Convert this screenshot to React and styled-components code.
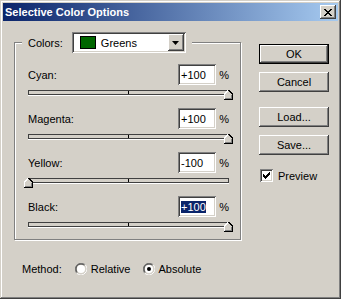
import React from "react";
import styled, { createGlobalStyle } from "styled-components";

const GlobalStyle = createGlobalStyle`
  html, body {
    margin: 0;
    padding: 0;
    background: #d4d0c8;
  }
  body {
    font-family: "Liberation Sans", Arial, sans-serif;
    font-size: 11px;
    color: #000;
  }
`;

const Window = styled.div`
  width: 341px;
  height: 299px;
  box-sizing: border-box;
  padding: 3px;
  background: #d4d0c8;
  box-shadow: inset -1px -1px #404040, inset 1px 1px #d4d0c8,
    inset -2px -2px #808080, inset 2px 2px #fff;
  display: flex;
  flex-direction: column;
`;

const TitleBar = styled.div`
  height: 18px;
  display: flex;
  align-items: center;
  padding: 0 2px;
  background: linear-gradient(to right, #0a246a, #a6caf0);
`;

const Title = styled.div`
  flex: 1;
  color: #fff;
  font-weight: bold;
  font-size: 11px;
`;

const raised = `
  background: #d4d0c8;
  box-shadow: inset -1px -1px #404040, inset 1px 1px #fff,
    inset -2px -2px #808080, inset 2px 2px #d4d0c8;
`;

const sunken = `
  background: #fff;
  box-shadow: inset 1px 1px #808080, inset -1px -1px #fff,
    inset 2px 2px #404040, inset -2px -2px #d4d0c8;
`;

const CloseButton = styled.div`
  ${raised}
  width: 16px;
  height: 14px;
  display: flex;
  align-items: center;
  justify-content: center;
`;

const Body = styled.div`
  flex: 1;
  display: flex;
`;

const LeftCol = styled.div`
  display: flex;
  flex-direction: column;
  padding: 21px 0 0 11px;
`;

const Group = styled.div`
  position: relative;
  width: 227px;
  height: 198px;
  box-sizing: border-box;
  border: 1px solid #808080;
  box-shadow: inset 1px 1px #fff, 1px 1px #fff;
  padding: 21px 0 0 13px;
`;

const Legend = styled.div`
  position: absolute;
  top: -11px;
  left: 7px;
  padding: 0 6px;
  background: #d4d0c8;
  display: flex;
  align-items: center;
  gap: 9px;
`;

const Dropdown = styled.div`
  ${sunken}
  width: 114px;
  height: 21px;
  box-sizing: border-box;
  padding: 2px;
  display: flex;
  align-items: center;
`;

const Swatch = styled.div`
  width: 16px;
  height: 13px;
  box-sizing: border-box;
  border: 1px solid #000;
  background: ${(p) => p.color};
  margin: 0 5px 0 6px;
`;

const ArrowButton = styled.div`
  ${raised}
  margin-left: auto;
  width: 16px;
  height: 17px;
  display: flex;
  align-items: center;
  justify-content: center;
`;

const SliderRow = styled.div`
  width: 201px;
  margin-bottom: 13px;
`;

const SliderHeader = styled.div`
  display: flex;
  align-items: center;
  height: 21px;
`;

const Label = styled.div`
  flex: 1;
`;

const Field = styled.div`
  ${sunken}
  width: 38px;
  height: 21px;
  box-sizing: border-box;
  padding-left: 3px;
  display: flex;
  align-items: center;
`;

const Selected = styled.span`
  background: #0a246a;
  color: #fff;
`;

const Percent = styled.div`
  width: 13px;
  text-align: right;
`;

const TrackWrap = styled.div`
  position: relative;
  margin-top: 5px;
  height: 5px;
`;

const Track = styled.div`
  height: 5px;
  box-sizing: border-box;
  border: 1px solid #404040;
  background: #d4d0c8;
  box-shadow: 0 1px #fff;
  position: relative;

  &::after {
    content: "";
    position: absolute;
    left: 99px;
    top: 0;
    width: 1px;
    height: 3px;
    background: #000;
  }
`;

const Thumb = styled.svg`
  position: absolute;
  top: 0;
  display: block;
`;

const MethodRow = styled.div`
  display: flex;
  align-items: center;
  margin: 22px 0 0 8px;
  height: 13px;
`;

const MethodLabel = styled.div`
  margin-right: 13px;
`;

const RadioOption = styled.div`
  display: flex;
  align-items: center;
  gap: 4px;
  margin-right: 12px;
`;

const RightCol = styled.div`
  display: flex;
  flex-direction: column;
  padding: 23px 0 0 18px;
`;

const Button = styled.div`
  ${raised}
  width: 70px;
  height: 20px;
  display: flex;
  align-items: center;
  justify-content: center;
  margin-bottom: ${(p) => p.gap}px;
  ${(p) =>
    p.primary &&
    `box-shadow: inset 0 0 0 1px #000, inset -2px -2px #404040,
      inset 2px 2px #fff, inset -3px -3px #808080;`}
`;

const CheckRow = styled.div`
  display: flex;
  align-items: center;
  gap: 5px;
  margin-left: 1px;
`;

const CheckBox = styled.div`
  ${sunken}
  width: 13px;
  height: 13px;
  display: flex;
  align-items: center;
  justify-content: center;
`;

const sliders = [
  { name: "Cyan:", value: 100 },
  { name: "Magenta:", value: 100 },
  { name: "Yellow:", value: -100 },
  { name: "Black:", value: 100, selected: true },
];

function Radio({ checked }) {
  return (
    <svg width="12" height="12" viewBox="0 0 12 12">
      <path d="M1.76 10.24 A6 6 0 0 1 10.24 1.76" stroke="#808080" fill="none" />
      <path d="M10.24 1.76 A6 6 0 0 1 1.76 10.24" stroke="#fff" fill="none" />
      <path d="M2.46 9.54 A5 5 0 0 1 9.54 2.46" stroke="#404040" fill="none" />
      <path d="M9.54 2.46 A5 5 0 0 1 2.46 9.54" stroke="#d4d0c8" fill="none" />
      <circle cx="6" cy="6" r="4" fill="#fff" />
      {checked && <circle cx="6" cy="6" r="2" fill="#000" />}
    </svg>
  );
}

function Slider({ name, value, selected }) {
  const left = ((value + 100) / 200) * 200 - 4;
  return (
    <SliderRow>
      <SliderHeader>
        <Label>{name}</Label>
        <Field>{selected ? <Selected>+100</Selected> : value > 0 ? "+100" : "-100"}</Field>
        <Percent>%</Percent>
      </SliderHeader>
      <TrackWrap>
        <Track />
        <Thumb width="9" height="10" viewBox="0 0 9 10" style={{ left }} shapeRendering="crispEdges">
          <polygon points="0,4 4,0 8,4 8,9 0,9" fill="#d4d0c8" />
          <path d="M0.5 9 V4 L4.5 0" stroke="#fff" fill="none" />
          <path d="M4.5 0 L8.5 4 V9.5 H0" stroke="#000" fill="none" />
          <path d="M7.5 4.5 V8.5 H1" stroke="#808080" fill="none" />
        </Thumb>
      </TrackWrap>
    </SliderRow>
  );
}

export default function App() {
  return (
    <>
      <GlobalStyle />
      <Window>
        <TitleBar>
          <Title>Selective Color Options</Title>
          <CloseButton>
            <svg width="8" height="7" viewBox="0 0 8 7" shapeRendering="crispEdges">
              <path d="M0 0h2v1h-2zM6 0h2v1h-2zM1 1h2v1h-2zM5 1h2v1h-2zM2 2h4v1h-4zM3 3h2v1h-2zM2 4h4v1h-4zM1 5h2v1h-2zM5 5h2v1h-2zM0 6h2v1h-2zM6 6h2v1h-2z" fill="#000" />
            </svg>
          </CloseButton>
        </TitleBar>
        <Body>
          <LeftCol>
            <Group>
              <Legend>
                <span>Colors:</span>
                <Dropdown>
                  <Swatch color="#006600" />
                  <span>Greens</span>
                  <ArrowButton>
                    <svg width="7" height="4" viewBox="0 0 7 4">
                      <polygon points="0,0 7,0 3.5,4" fill="#000" />
                    </svg>
                  </ArrowButton>
                </Dropdown>
              </Legend>
              {sliders.map((s) => (
                <Slider key={s.name} {...s} />
              ))}
            </Group>
            <MethodRow>
              <MethodLabel>Method:</MethodLabel>
              <RadioOption>
                <Radio />
                <span>Relative</span>
              </RadioOption>
              <RadioOption>
                <Radio checked />
                <span>Absolute</span>
              </RadioOption>
            </MethodRow>
          </LeftCol>
          <RightCol>
            <Button primary gap={8}>OK</Button>
            <Button gap={15}>Cancel</Button>
            <Button gap={8}>Load...</Button>
            <Button gap={14}>Save...</Button>
            <CheckRow>
              <CheckBox>
                <svg width="7" height="7" viewBox="0 0 7 7" shapeRendering="crispEdges">
                  <path d="M0 2h1v3h-1zM1 3h1v3h-1zM2 4h1v3h-1zM3 3h1v3h-1zM4 2h1v3h-1zM5 1h1v3h-1zM6 0h1v3h-1z" fill="#000" />
                </svg>
              </CheckBox>
              <span>Preview</span>
            </CheckRow>
          </RightCol>
        </Body>
      </Window>
    </>
  );
}
